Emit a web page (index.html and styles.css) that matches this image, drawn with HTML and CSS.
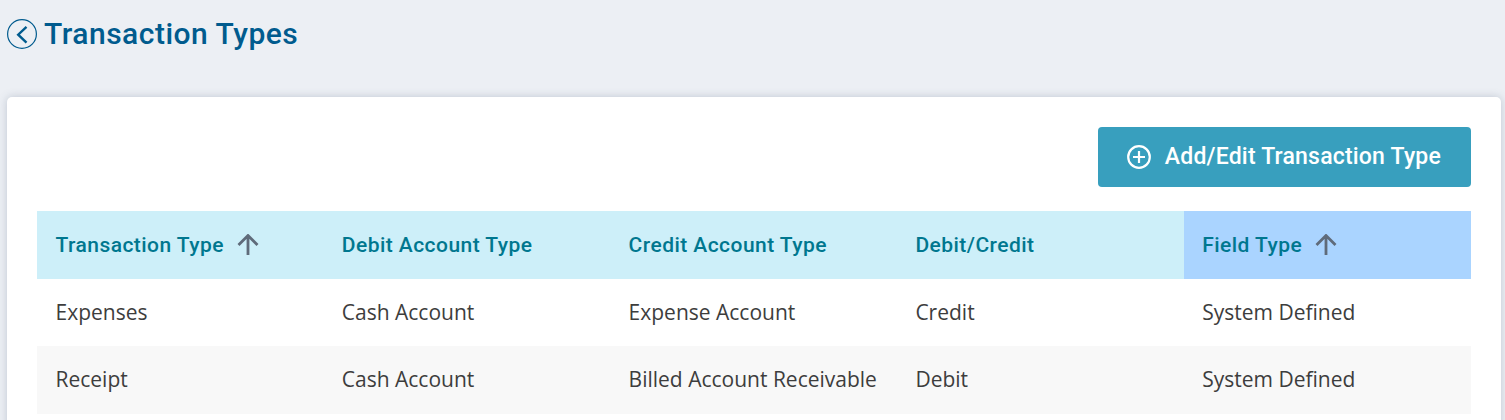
FILE: index.html
```html
<!DOCTYPE html>
<html lang="en">
<head>
<meta charset="utf-8">
<title>Transaction Types</title>
<link rel="stylesheet" href="styles.css">
</head>
<body>
<header class="page-head">
  <svg class="back-icon" viewBox="0 0 30 30" aria-hidden="true">
    <circle cx="15" cy="15" r="14.4"/>
    <path d="M19.500 7.800 11.200 15.700 19.500 23.600"/>
  </svg>
  <h1 class="page-title">Transaction Types</h1>
</header>
<main class="card">
  <div class="toolbar">
    <button class="add-btn" type="button">
      <svg class="plus-icon" viewBox="0 0 24 24" aria-hidden="true">
        <circle cx="12" cy="12" r="10.8"/>
        <path d="M12 6v12M6 12h12"/>
      </svg>
      <span class="add-label">Add/Edit Transaction Type</span>
    </button>
  </div>
  <table class="grid">
    <thead>
      <tr>
        <th><span class="th-inner">Transaction Type <svg class="sort-icon" viewBox="0 0 22 22" aria-hidden="true"><path d="M11 21V2M1.500 11 11 1.500 20.500 11"/></svg></span></th>
        <th>Debit Account Type</th>
        <th>Credit Account Type</th>
        <th>Debit/Credit</th>
        <th class="sorted"><span class="th-inner">Field Type <svg class="sort-icon" viewBox="0 0 22 22" aria-hidden="true"><path d="M11 21V2M1.500 11 11 1.500 20.500 11"/></svg></span></th>
      </tr>
    </thead>
    <tbody>
      <tr>
        <td>Expenses</td>
        <td>Cash Account</td>
        <td>Expense Account</td>
        <td>Credit</td>
        <td>System Defined</td>
      </tr>
      <tr class="alt">
        <td>Receipt</td>
        <td>Cash Account</td>
        <td>Billed Account Receivable</td>
        <td>Debit</td>
        <td>System Defined</td>
      </tr>
    </tbody>
  </table>
</main>
</body>
</html>
```
FILE: styles.css
```css
* { box-sizing: border-box; }
html, body { height: 100%; }
body {
  margin: 0;
  background: #eceff4;
  font-family: "Open Sans", "Liberation Sans", sans-serif;
  overflow: hidden;
}
.page-head {
  display: flex;
  align-items: center;
  gap: 7px;
  height: 97px;
  padding: 0 0 29px 7px;
}
.back-icon {
  width: 30px;
  height: 30px;
  flex: none;
  fill: none;
  stroke: #005b8e;
}
.back-icon circle { stroke-width: 1.2; }
.back-icon path { stroke-width: 2.4; }
.page-title {
  margin: 0;
  font: 500 30px/1.2 Roboto, sans-serif;
  letter-spacing: 0.5px;
  color: #005b8e;
}
.card {
  margin: 0 4px 0 7px;
  padding: 30px 30px 0 30px;
  height: 340px;
  background: #fff;
  border-radius: 5px;
  box-shadow: 0 0 9px rgba(60, 80, 110, 0.25);
}
.toolbar {
  display: flex;
  justify-content: flex-end;
  margin-bottom: 24px;
}
.add-btn {
  display: flex;
  align-items: center;
  gap: 14px;
  height: 60px;
  padding: 0 30px 0 29px;
  border: 0;
  border-radius: 4px;
  background: #389fbe;
  color: #fff;
  font: 500 23px/1 Roboto, sans-serif;
  letter-spacing: 0.2px;
}
.add-label { padding-bottom: 2px; }
.plus-icon {
  width: 24px;
  height: 24px;
  fill: none;
  stroke: #fff;
  stroke-width: 2.2;
}
.grid {
  width: 100%;
  table-layout: fixed;
  border-collapse: collapse;
}
.grid th, .grid td {
  padding: 0 0 0 18px;
  text-align: left;
}
.grid th:first-child, .grid td:first-child { padding-left: 18.500px; }
.grid th {
  height: 68px;
  background: #cdeff9;
  color: #00778f;
  font: 500 21px/1 Roboto, sans-serif;
  letter-spacing: 0.45px;
}
.grid th.sorted { background: #aad4ff; }
.th-inner {
  display: inline-flex;
  align-items: center;
  gap: 13px;
}
.sort-icon {
  width: 22px;
  height: 22px;
  fill: none;
  stroke: #5f6b7a;
  stroke-width: 2.8;
}
.grid td {
  height: 67px;
  padding-bottom: 2px;
  color: #3d3d3d;
  font-size: 21px;
}
.grid .alt td {
  height: 68px;
  background: #f8f8f8;
}
```
